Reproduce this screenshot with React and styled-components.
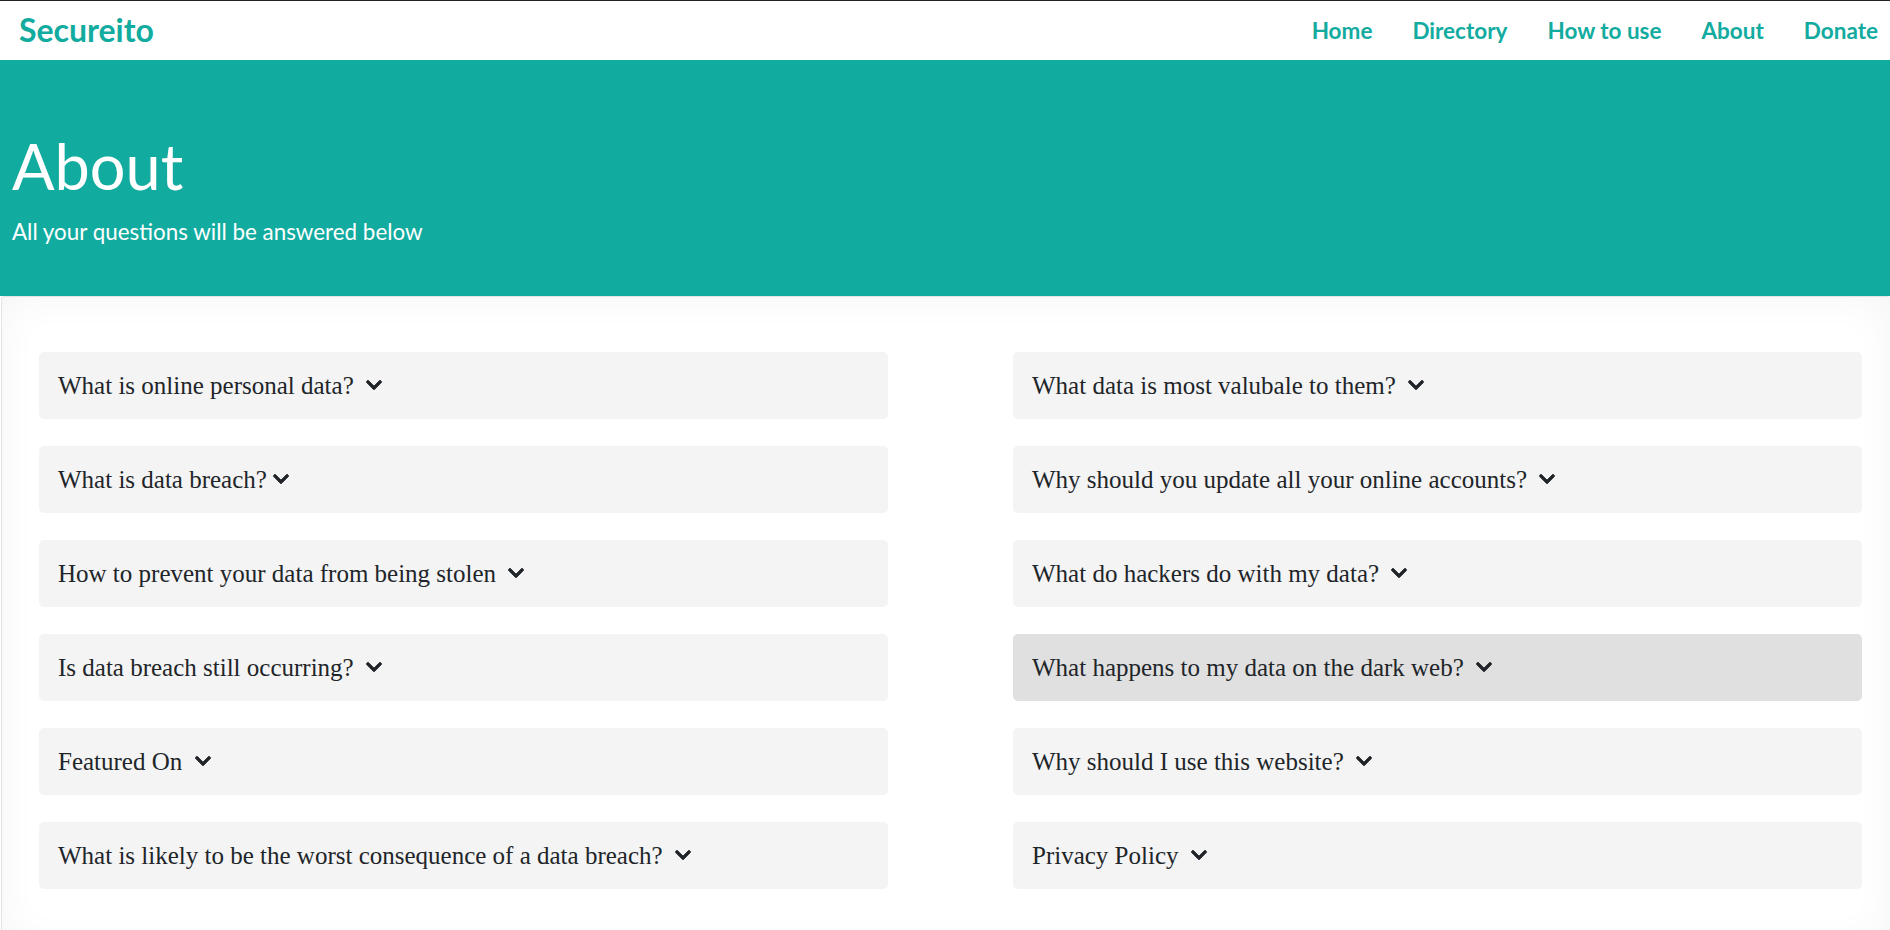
import React from "react";
import styled, { createGlobalStyle } from "styled-components";

const Global = createGlobalStyle`
  html, body {
    margin: 0;
    padding: 0;
    overflow: hidden;
    background: #fff;
  }
  * { box-sizing: border-box; }
`;

const TEAL = "#12ab9f";

const Header = styled.header`
  height: 60px;
  border-top: 1px solid #222;
  background: #fff;
  display: flex;
  align-items: center;
  justify-content: space-between;
  padding: 0 12px 0 19px;
  font-family: Lato, "Liberation Sans", sans-serif;
`;

const Brand = styled.a`
  font-size: 32px;
  font-weight: 700;
  line-height: 1.2;
  color: ${TEAL};
  text-decoration: none;
`;

const Nav = styled.nav`
  display: flex;
  align-items: center;
  gap: 40px;
`;

const NavLink = styled.a`
  font-size: 22.5px;
  font-weight: 700;
  line-height: 1.2;
  color: ${TEAL};
  text-decoration: none;
`;

const Hero = styled.section`
  background: ${TEAL};
  color: #fff;
  padding: 68px 12px 51px;
  font-family: Lato, "Liberation Sans", sans-serif;
`;

const Title = styled.h1`
  margin: 0;
  font-size: 63px;
  font-weight: 400;
  line-height: 1.2;
`;

const Lead = styled.p`
  margin: 15px 0 0;
  font-size: 22.4px;
  font-weight: 400;
  line-height: 1.2;
`;

const Panel = styled.section`
  margin-left: 1px;
  border: 1px solid #e4e4e4;
  border-right: none;
  border-radius: 4px;
  box-shadow: inset 0 0 40px rgba(0, 0, 0, 0.045);
  background: #fff;
  padding: 55px 28px 56px 37px;
  display: grid;
  grid-template-columns: 1fr 1fr;
  column-gap: 125px;
`;

const Column = styled.div`
  display: flex;
  flex-direction: column;
  gap: 27px;
`;

const Item = styled.div`
  height: 67px;
  border-radius: 5px;
  background: ${(p) => (p.$hover ? "#e0e0e0" : "#f4f4f4")};
  padding: 0 19px;
  font-family: "Liberation Serif", "Times New Roman", serif;
  font-size: 25px;
  line-height: 67px;
  color: #212529;
  white-space: nowrap;
  cursor: pointer;
`;

const ChevronSvg = styled.svg`
  width: 18px;
  height: 18px;
  margin-left: 5px;
  fill: #212529;
  stroke: #212529;
  stroke-width: 22px;
  stroke-linejoin: round;
  vertical-align: baseline;
  overflow: visible;
`;

function Chevron() {
  return (
    <ChevronSvg viewBox="0 0 448 512" aria-hidden="true">
      <path d="M207.029 381.476L12.686 187.132c-9.373-9.373-9.373-24.569 0-33.941l22.667-22.667c9.357-9.357 24.522-9.375 33.901-.04L224 284.505l154.745-154.021c9.379-9.335 24.544-9.317 33.901.04l22.667 22.667c9.373 9.373 9.373 24.569 0 33.941L240.971 381.476c-9.373 9.372-24.569 9.372-33.942 0z" />
    </ChevronSvg>
  );
}

const left = [
  "What is online personal data? ",
  "What is data breach?",
  "How to prevent your data from being stolen ",
  "Is data breach still occurring? ",
  "Featured On ",
  "What is likely to be the worst consequence of a data breach? ",
];

const right = [
  "What data is most valubale to them? ",
  "Why should you update all your online accounts? ",
  "What do hackers do with my data? ",
  "What happens to my data on the dark web? ",
  "Why should I use this website? ",
  "Privacy Policy ",
];

function Question({ text, hover }) {
  return (
    <Item $hover={hover}>
      {text}
      <Chevron />
    </Item>
  );
}

export default function App() {
  return (
    <>
      <Global />
      <Header>
        <Brand href="#">Secureito</Brand>
        <Nav>
          <NavLink href="#">Home</NavLink>
          <NavLink href="#">Directory</NavLink>
          <NavLink href="#">How to use</NavLink>
          <NavLink href="#">About</NavLink>
          <NavLink href="#">Donate</NavLink>
        </Nav>
      </Header>
      <Hero>
        <Title>About</Title>
        <Lead>All your questions will be answered below</Lead>
      </Hero>
      <Panel>
        <Column>
          {left.map((t) => (
            <Question key={t} text={t} />
          ))}
        </Column>
        <Column>
          {right.map((t, i) => (
            <Question key={t} text={t} hover={i === 3} />
          ))}
        </Column>
      </Panel>
    </>
  );
}
